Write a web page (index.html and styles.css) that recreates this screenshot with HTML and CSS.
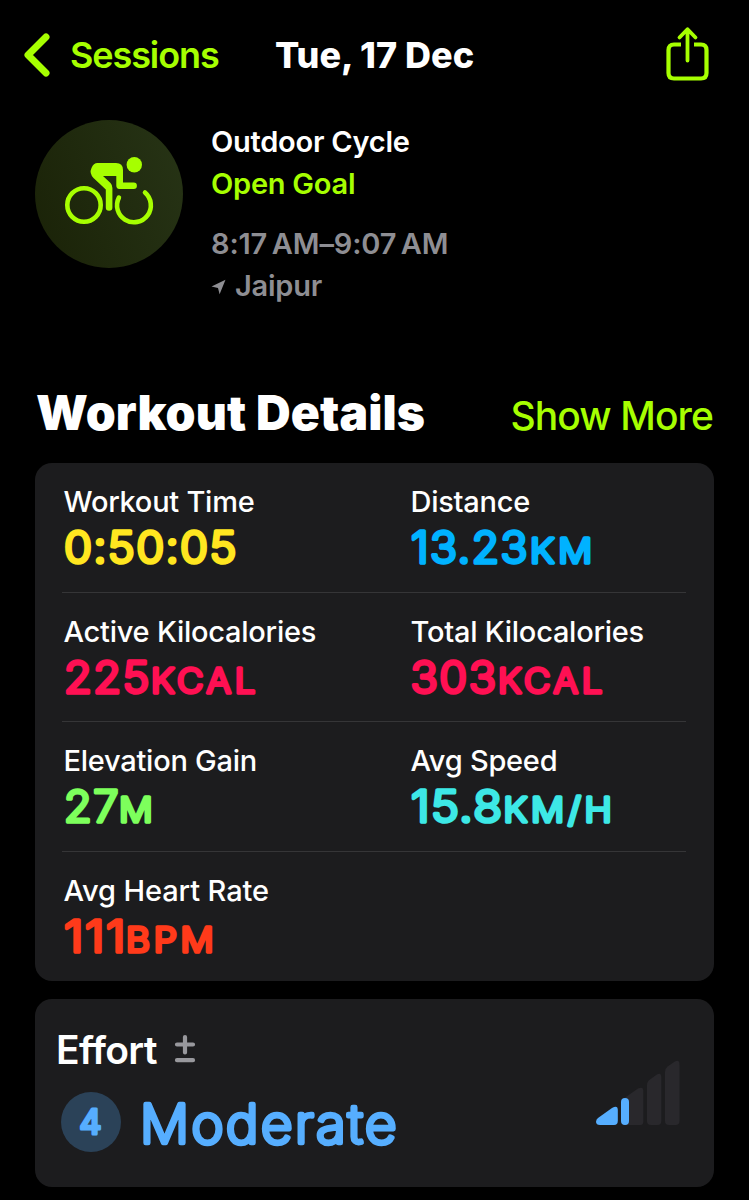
FILE: index.html
```html
<!DOCTYPE html>
<html lang="en">
<head>
  <meta charset="UTF-8">
  <title>Workout Details</title>
  <link rel="stylesheet" href="styles.css">
</head>
<body>

  <header class="navbar">
    <a class="back">
      <svg class="chevron" width="30" height="48" viewBox="0 0 30 48"><path d="M24 6 L6 24 L24 42"/></svg>
      <span>Sessions</span>
    </a>
    <div class="title">Tue, 17 Dec</div>
    <svg class="share" width="44" height="56" viewBox="0 0 44 56">
      <path class="box" d="M16 17.500 H9 Q3.500 17.500 3.500 23 V46 Q3.500 51.500 9 51.500 H36 Q41.500 51.500 41.500 46 V23 Q41.500 17.500 36 17.500 H29"/>
      <path class="arrow" d="M22.500 33.500 V2.500 M14.500 10.500 L22.500 2.200 L30.500 10.500"/>
    </svg>
  </header>

  <section class="summary">
    <div class="badge">
      <svg width="148" height="148" viewBox="0 0 148 148">
        <circle class="wheel" cx="49" cy="85" r="16.700"/>
        <path class="wheel" d="M83.900 77.600 A16.900 16.900 0 1 0 110 72.500"/>
        <circle cx="99.300" cy="44.700" r="7.700"/>
        <path d="M62.500 43 H81 Q88 43 88 50 V62.500 H98.700 a3.200 3.200 0 0 1 0 6.400 H84.500 Q81.300 69 81.300 65.500 V56 H68 L75.500 63 Q77.400 65 77.400 68 V87.500 a3.300 3.300 0 0 1 -6.600 0 V69.500 L58.500 58 Q54 53 56.500 48 Q58.500 43 62.500 43 Z"/>
      </svg>
    </div>
    <div class="info">
      <div class="name">Outdoor Cycle</div>
      <div class="goal">Open Goal</div>
      <div class="time">8:17&#8201;AM–9:07&#8201;AM</div>
      <div class="place">
        <svg width="16" height="16" viewBox="0 0 16 16"><path d="M14.500 0.800 L0.500 7.500 L7 9 L8.600 15.200 Z"/></svg>
        <span>Jaipur</span>
      </div>
    </div>
  </section>

  <div class="section-head">
    <h1>Workout Details</h1>
    <a class="more">Show More</a>
  </div>

  <section class="card details">
    <div class="row">
      <div class="metric yellow">
        <div class="label">Workout Time</div>
        <svg class="value"><text x="0" y="42.600" textLength="174" lengthAdjust="spacingAndGlyphs">0:50:05</text></svg>
      </div>
      <div class="metric blue">
        <div class="label">Distance</div>
        <svg class="value"><text x="0" y="42.600" textLength="118" lengthAdjust="spacingAndGlyphs">13.23</text><text class="unit" x="119" y="42.600" textLength="66" lengthAdjust="spacingAndGlyphs">KM</text></svg>
      </div>
    </div>
    <div class="row">
      <div class="metric pink">
        <div class="label">Active Kilocalories</div>
        <svg class="value"><text x="0" y="42.600" textLength="87" lengthAdjust="spacingAndGlyphs">225</text><text class="unit" x="87" y="42.600" textLength="108" lengthAdjust="spacingAndGlyphs">KCAL</text></svg>
      </div>
      <div class="metric pink">
        <div class="label">Total Kilocalories</div>
        <svg class="value"><text x="-0.500" y="42.600" textLength="87" lengthAdjust="spacingAndGlyphs">303</text><text class="unit" x="87" y="42.600" textLength="108" lengthAdjust="spacingAndGlyphs">KCAL</text></svg>
      </div>
    </div>
    <div class="row">
      <div class="metric green">
        <div class="label">Elevation Gain</div>
        <svg class="value"><text x="0" y="42.600" textLength="56" lengthAdjust="spacingAndGlyphs">27</text><text class="unit" x="55" y="42.600" textLength="37.500" lengthAdjust="spacingAndGlyphs">M</text></svg>
      </div>
      <div class="metric cyan">
        <div class="label">Avg Speed</div>
        <svg class="value"><text x="0" y="42.600" textLength="92.500" lengthAdjust="spacingAndGlyphs">15.8</text><text class="unit" x="92.500" y="42.600" textLength="112" lengthAdjust="spacingAndGlyphs">KM/H</text></svg>
      </div>
    </div>
    <div class="row">
      <div class="metric red">
        <div class="label heart">Avg Heart Rate</div>
        <svg class="value"><text x="0" y="42.600" textLength="63" lengthAdjust="spacingAndGlyphs">111</text><text class="unit" x="62" y="42.600" textLength="91.500" lengthAdjust="spacingAndGlyphs">BPM</text></svg>
      </div>
    </div>
  </section>

  <section class="card effort">
    <div class="effort-head">
      <span>Effort</span>
      <svg width="24" height="30" viewBox="0 0 24 30"><path d="M4 10.500 H20 M12 3 V18.500 M4 26.200 H20"/></svg>
    </div>
    <div class="effort-body">
      <svg class="level" width="60" height="60" viewBox="0 0 60 60">
        <circle cx="30" cy="30" r="30"/>
        <text x="29.500" y="42" text-anchor="middle">4</text>
      </svg>
      <svg class="rating" width="270" height="72"><text x="0" y="51" textLength="259" lengthAdjust="spacingAndGlyphs">Moderate</text></svg>
      <svg class="bars" width="84" height="65" viewBox="0 0 84 65">
        <path d="M27 39 L42 28.500 Q47.300 26 47.300 31 V62 Q47.300 65 44.300 65 H27 Z"/>
        <path d="M51 25 Q51 21.500 54 19.500 L60.500 14.800 Q65.300 12 65.300 17.500 V61 Q65.300 65 61.500 65 H55 Q51 65 51 61 Z"/>
        <path d="M69 12 Q69 8.500 72 6.300 L78.500 1.800 Q83.500 -1 83.500 4.500 V61 Q83.500 65 79.500 65 H73 Q69 65 69 61 Z"/>
        <path class="on" d="M2 58 L16 48 Q21.800 44.500 21.800 50 V61 Q21.800 65 18 65 H4 Q0 65 0 61.500 Q0.300 59.300 2 58 Z"/>
        <rect class="on" x="25" y="38" width="8" height="27" rx="4"/>
      </svg>
    </div>
  </section>

</body>
</html>
```
FILE: styles.css
```css
* {
  box-sizing: border-box;
}

body {
  margin: 0;
  height: 1200px;
  overflow: hidden;
  background-color: #000;
  color: #fff;
  font-family: Inter, "Liberation Sans", sans-serif;
}

svg {
  display: block;
  flex-shrink: 0;
  overflow: visible;
}

.navbar {
  display: grid;
  grid-template-columns: 1fr auto 1fr;
  align-items: center;
  height: 110px;
  padding: 0 40px;
  color: #a6ff00;
}

.back {
  display: flex;
  align-items: center;
  gap: 18px;
  margin-left: -18px;
  font-size: 36px;
  font-weight: 570;
  letter-spacing: -1.1px;
}

.chevron path {
  fill: none;
  stroke: #a6ff00;
  stroke-width: 7;
  stroke-linecap: round;
  stroke-linejoin: round;
}

.title {
  color: #fff;
  font-size: 36px;
  font-weight: 800;
}

.share {
  justify-self: end;
}

.share path {
  fill: none;
  stroke: #a6ff00;
  stroke-width: 4.200;
}

.share .arrow {
  stroke-width: 3.800;
  stroke-linecap: round;
  stroke-linejoin: round;
}

.summary {
  display: flex;
  gap: 28px;
  height: 276px;
  padding: 10px 35px 0;
}

.badge {
  width: 148px;
  height: 148px;
  border-radius: 50%;
  background: linear-gradient(70deg, #1a2207, #273416);
  fill: #a6ff00;
}

.wheel {
  fill: none;
  stroke: #a6ff00;
  stroke-width: 4.600;
  stroke-linecap: round;
}

.info {
  padding-top: 1px;
  font-size: 29px;
  font-weight: 560;
  line-height: 42.300px;
  letter-spacing: -0.25px;
  color: #8e8e93;
}

.name {
  color: #fff;
}

.goal {
  color: #a6ff00;
  margin-bottom: 17.500px;
}

.time {
  letter-spacing: -0.150px;
}

.place {
  display: flex;
  align-items: center;
  gap: 8px;
}

.place svg {
  fill: #8e8e93;
}

.section-head {
  display: flex;
  justify-content: space-between;
  align-items: baseline;
  height: 77px;
  padding: 0 36px;
}

h1 {
  margin: 0;
  font-size: 48px;
  font-weight: 900;
  line-height: 54px;
  letter-spacing: 0.1px;
}

.more {
  color: #a6ff00;
  font-size: 39px;
  font-weight: 550;
  letter-spacing: -0.9px;
}

.card {
  margin: 0 35px;
  border-radius: 17px;
  background-color: #1c1c1e;
}

.details {
  padding: 0 28px 0 27px;
}

.row {
  display: grid;
  grid-template-columns: 347px 1fr;
  height: 129.500px;
  padding: 20px 0 0 1.500px;
  border-bottom: 1px solid #353537;
}

.row:last-child {
  border-bottom: none;
}

.label {
  height: 37px;
  font-size: 29px;
  font-weight: 550;
  line-height: 37px;
  letter-spacing: -0.25px;
  white-space: nowrap;
}

.heart {
  letter-spacing: -0.1px;
}

.value {
  width: 240px;
  height: 56px;
  fill: currentColor;
  stroke: currentColor;
  stroke-width: 3.600;
  stroke-linejoin: round;
  font-size: 44px;
  font-weight: 280;
  letter-spacing: 1.5px;
}

.unit {
  font-size: 34px;
  letter-spacing: 3.500px;
}

.metric .label { color: #fff; }
.yellow { color: #ffe620; }
.blue { color: #00b2ff; }
.pink { color: #ff1053; }
.green { color: #7dff5c; }
.cyan { color: #3de8e6; }
.red { color: #ff3a1a; }

.effort {
  height: 188px;
  margin-top: 18px;
  padding: 26px 34px 0 21px;
}

.effort-head {
  display: flex;
  align-items: center;
  gap: 16px;
  height: 48px;
  font-size: 39px;
  font-weight: 580;
  letter-spacing: -0.7px;
}

.effort-head path {
  stroke: #98989d;
  stroke-width: 4.200;
  stroke-linecap: round;
}

.effort-body {
  display: flex;
  align-items: flex-start;
  padding: 19px 0 0 5px;
}

.level circle {
  fill: #2b4258;
}

.level text,
.rating {
  fill: #56aeff;
  stroke: #56aeff;
  stroke-linejoin: round;
}

.level text {
  stroke-width: 3.200;
  font-size: 34px;
  font-weight: 420;
}

.rating {
  margin-left: 19px;
  stroke-width: 4.600;
  font-size: 53px;
  font-weight: 230;
  letter-spacing: 2.500px;
}

.bars {
  margin: -32px 0 0 auto;
  fill: #29282c;
}

.bars .on {
  fill: #56aeff;
}
```
